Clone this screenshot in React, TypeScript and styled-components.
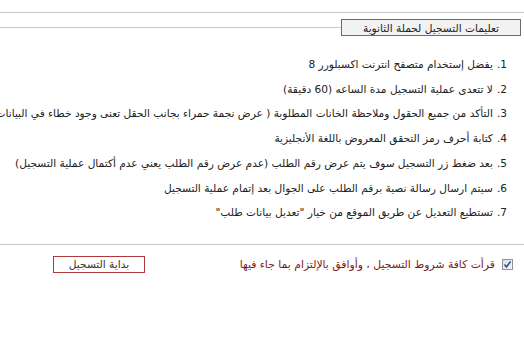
import React from "react";
import styled, { createGlobalStyle } from "styled-components";

const Global = createGlobalStyle`
  html, body { margin: 0; padding: 0; background: #fff; }
  body { font-family: Tahoma, "DejaVu Sans", sans-serif; font-size: 10.6px; color: #222; overflow: hidden; }
`;

const Page = styled.div`
  direction: rtl;
  width: 524px;
  height: 360px;
  padding-top: 12px;
  box-sizing: border-box;
`;

const Rule = styled.div`
  height: 0;
  border-top: 1px solid #c8c8c8;
`;

const Header = styled.div`
  display: flex;
  align-items: center;
  margin-top: 6px;
  padding-right: 3px;
`;

const Legend = styled.div`
  width: 180px;
  height: 17px;
  box-sizing: border-box;
  border: 1px solid #6a6a6a;
  background: #f2f2f2;
  display: flex;
  align-items: center;
  justify-content: center;
  font-size: 10.6px;
  color: #222;
`;

const HeaderLine = styled.div`
  flex: 1;
  border-top: 1px solid #c8c8c8;
`;

const List = styled.ol`
  list-style: none;
  margin: 16px 0 0 0;
  padding: 0 17px 0 0;
`;

const Item = styled.li`
  line-height: 24.7px;
  white-space: nowrap;
  color: #222;
`;

const Num = styled.span`
  margin-left: 4px;
`;

const BottomRule = styled(Rule)`
  margin-top: 19px;
`;

const Actions = styled.div`
  display: flex;
  align-items: center;
  justify-content: space-between;
  padding: 0 11px 0 53px;
  margin-top: 11px;
`;

const Agree = styled.label`
  display: flex;
  align-items: center;
  gap: 7px;
  color: #7a1a1a;
  font-size: 10.8px;
`;

const CheckBox = styled.span`
  width: 11px;
  height: 11px;
  box-sizing: border-box;
  border: 1px solid #8f8f9d;
  background: linear-gradient(135deg, #dcdcdc, #f7f7f7);
  display: inline-flex;
  align-items: center;
  justify-content: center;
`;

const StartButton = styled.button`
  width: 92px;
  height: 17px;
  box-sizing: border-box;
  border: 1px solid #b03a3a;
  background: #fff;
  color: #333;
  font-family: inherit;
  font-size: 10.6px;
  padding: 0;
  display: flex;
  align-items: center;
  justify-content: center;
`;

const items = [
  "يفضل إستخدام متصفح انترنت اكسبلورر 8",
  "لا تتعدى عملية التسجيل مدة الساعه (60 دقيقة)",
  "التأكد من جميع الحقول وملاحظة الخانات المطلوبة ( عرض نجمة حمراء بجانب الحقل تعنى وجود خطاء في البيانات )",
  "كتابة أحرف رمز التحقق المعروض باللغة الأنجليزية",
  "بعد ضغط زر التسجيل سوف يتم عرض رقم الطلب (عدم عرض رقم الطلب يعني عدم أكتمال عملية التسجيل)",
  "سيتم ارسال رسالة نصية برقم الطلب على الجوال بعد إتمام عملية التسجيل",
  "تستطيع التعديل عن طريق الموقع من خيار \"تعديل بيانات طلب\"",
];

export default function App() {
  return (
    <>
      <Global />
      <Page>
        <Rule />
        <Header>
          <Legend>تعليمات التسجيل لحملة الثانوية</Legend>
          <HeaderLine />
        </Header>
        <List>
          {items.map((t, i) => (
            <Item key={i}>
              <Num>{i + 1}.</Num>
              {t}
            </Item>
          ))}
        </List>
        <BottomRule />
        <Actions>
          <Agree>
            <CheckBox role="checkbox" aria-checked="true">
              <svg width="9" height="9" viewBox="0 0 9 9">
                <path d="M1.5 4.5 L3.5 7 L7.5 1.5" fill="none" stroke="#2a4fa8" strokeWidth="1.6" />
              </svg>
            </CheckBox>
            قرأت كافة شروط التسجيل ، وأوافق بالإلتزام بما جاء فيها
          </Agree>
          <StartButton type="button">بداية التسجيل</StartButton>
        </Actions>
      </Page>
    </>
  );
}
